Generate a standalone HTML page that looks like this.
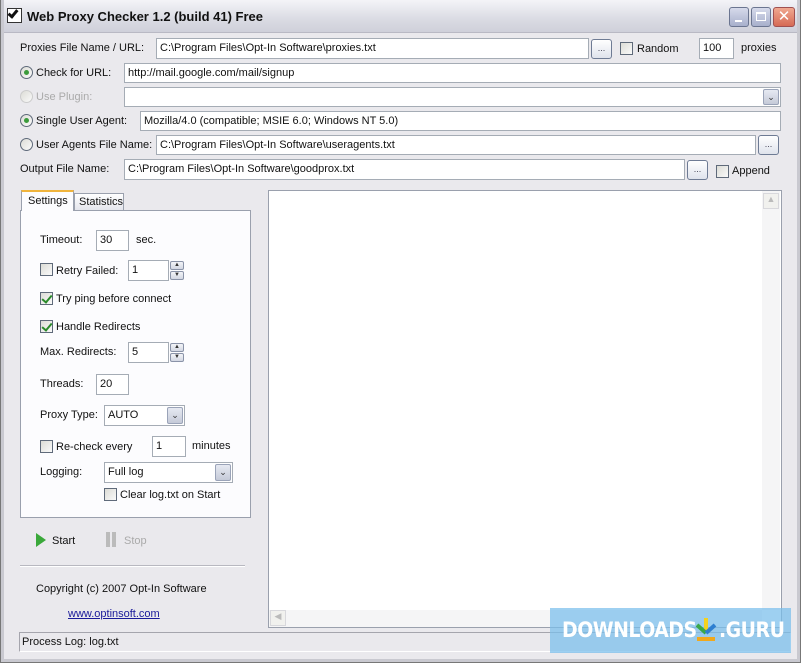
<!DOCTYPE html>
<html><head><meta charset="utf-8"><style>
*{box-sizing:border-box;margin:0;padding:0}
body{width:801px;height:663px;overflow:hidden;background:#eae9ed;font-family:"Liberation Sans",Arial,sans-serif;font-size:11px;color:#111;position:relative}
.a{position:absolute;white-space:nowrap}
.win{position:absolute;left:0;top:0;width:801px;height:663px;border:1px solid #777;border-top:none;box-shadow:inset 3px 0 0 #c9c9d0,inset -3px 0 0 #c9c9d0,inset 0 -3px 0 #c9c9d0}
.title{position:absolute;left:0;top:0;width:801px;height:33px;background:linear-gradient(#f4f4f8,#dadbe3 60%,#cfd0da);border-bottom:1px solid #b9b9c4}
.in{position:absolute;background:#fff;border:1px solid #a5acb5;padding:3px 3px;font-size:11px;line-height:13px}
.btn{position:absolute;width:21px;height:20px;border:1px solid #6e7b94;border-radius:3px;background:linear-gradient(#fff,#dfe3ec);font-size:9px;text-align:center;line-height:16px;color:#445}
.cb{position:absolute;width:13px;height:13px;border:1px solid #5f6a7a;background:linear-gradient(135deg,#dcdcd6,#fafafa)}
.cb.on::after{content:"";position:absolute;left:3px;top:0px;width:4px;height:8px;border:solid #2a8a2a;border-width:0 2px 2px 0;transform:rotate(40deg)}
.rd{position:absolute;width:13px;height:13px;border:1px solid #5f6a7a;border-radius:50%;background:linear-gradient(135deg,#dcdcd6,#fafafa)}
.rd.on::after{content:"";position:absolute;left:3px;top:3px;width:5px;height:5px;border-radius:50%;background:#3b9b3b}
.dd{position:absolute;right:1px;top:1px;bottom:1px;width:16px;border:1px solid #9aa3b8;border-radius:2px;background:linear-gradient(#e6e9f2,#c5cad8);text-align:center;font-size:9px;line-height:15px;color:#333}
.sp{position:absolute;width:14px;height:9px;border:1px solid #8a93a8;border-radius:2px;background:linear-gradient(#f3f4f8,#d3d7e2);font-size:6px;line-height:7px;text-align:center;color:#333}
</style></head><body>
<div class="title"></div>
<div class="win"></div>
<div class="a" style="left:7px;top:8px;width:15px;height:15px;border:1px solid #333;background:#fff"></div>
<div class="a" style="left:10px;top:8px;width:6px;height:10px;border:solid #111;border-width:0 3px 3px 0;transform:rotate(40deg)"></div>
<div class="a" style="left:27px;top:9px;font-weight:bold;font-size:13px">Web Proxy Checker 1.2 (build 41) Free</div>
<div class="a" style="left:729px;top:7px;width:20px;height:20px;border:1px solid #6b7590;border-radius:3px;background:linear-gradient(#d6daeb,#a8b0cc)"><div style="position:absolute;left:5px;top:12px;width:7px;height:2px;background:#fff"></div></div>
<div class="a" style="left:751px;top:7px;width:20px;height:20px;border:1px solid #6b7590;border-radius:3px;background:linear-gradient(#d6daeb,#a8b0cc)"><div style="position:absolute;left:4px;top:4px;width:10px;height:9px;border:1px solid #fff;border-top-width:2px"></div></div>
<div class="a" style="left:773px;top:7px;width:22px;height:20px;border:1px solid #a05050;border-radius:3px;background:linear-gradient(#f0a890,#d66a55);color:#fff;font-size:15px;text-align:center;line-height:18px">✕</div>

<div class="a" style="left:20px;top:42px">Proxies File Name / URL:</div>
<div class="in" style="left:156px;top:38px;width:433px;height:21px">C:\Program Files\Opt-In Software\proxies.txt</div>
<div class="btn" style="left:591px;top:39px">...</div>
<div class="cb" style="left:620px;top:42px"></div><div class="a" style="left:637px;top:43px">Random</div>
<div class="in" style="left:699px;top:38px;width:35px;height:21px">100</div>
<div class="a" style="left:741px;top:42px">proxies</div>

<div class="rd on" style="left:20px;top:66px"></div><div class="a" style="left:36px;top:67px">Check for URL:</div>
<div class="in" style="left:124px;top:63px;width:657px;height:20px">http://mail.google.com/mail/signup</div>
<div class="rd" style="left:20px;top:90px;border-color:#ccc"></div><div class="a" style="left:36px;top:91px;color:#aaa">Use Plugin:</div>
<div class="in" style="left:124px;top:87px;width:657px;height:20px"><div class="dd">⌄</div></div>
<div class="rd on" style="left:20px;top:114px"></div><div class="a" style="left:36px;top:115px">Single User Agent:</div>
<div class="in" style="left:140px;top:111px;width:641px;height:20px">Mozilla/4.0 (compatible; MSIE 6.0; Windows NT 5.0)</div>
<div class="rd" style="left:20px;top:138px"></div><div class="a" style="left:36px;top:139px">User Agents File Name:</div>
<div class="in" style="left:156px;top:135px;width:600px;height:20px">C:\Program Files\Opt-In Software\useragents.txt</div>
<div class="btn" style="left:758px;top:135px">...</div>
<div class="a" style="left:20px;top:163px">Output File Name:</div>
<div class="in" style="left:124px;top:159px;width:561px;height:21px">C:\Program Files\Opt-In Software\goodprox.txt</div>
<div class="btn" style="left:687px;top:160px">...</div>
<div class="cb" style="left:716px;top:165px"></div><div class="a" style="left:732px;top:165px">Append</div>

<div class="a" style="left:20px;top:210px;width:231px;height:308px;background:#fcfcfe;border:1px solid #9aa0ad"></div>
<div class="a" style="left:21px;top:190px;width:53px;height:21px;background:#fcfcfe;border:1px solid #9aa0ad;border-bottom:none;border-top:2px solid #f0b43c;padding:3px 0 0 6px">Settings</div>
<div class="a" style="left:74px;top:193px;width:50px;height:17px;background:linear-gradient(#fff,#e4e5ec);border:1px solid #9aa0ad;border-bottom:none;padding:2px 0 0 4px">Statistics</div>

<div class="a" style="left:40px;top:234px">Timeout:</div>
<div class="in" style="left:96px;top:230px;width:33px;height:21px">30</div><div class="a" style="left:136px;top:234px">sec.</div>
<div class="cb" style="left:40px;top:263px"></div><div class="a" style="left:56px;top:265px">Retry Failed:</div>
<div class="in" style="left:128px;top:260px;width:41px;height:21px">1</div>
<div class="sp" style="left:170px;top:261px">▲</div><div class="sp" style="left:170px;top:271px">▼</div>
<div class="cb on" style="left:40px;top:292px"></div><div class="a" style="left:56px;top:293px">Try ping before connect</div>
<div class="cb on" style="left:40px;top:320px"></div><div class="a" style="left:56px;top:321px">Handle Redirects</div>
<div class="a" style="left:40px;top:346px">Max. Redirects:</div>
<div class="in" style="left:128px;top:342px;width:41px;height:21px">5</div>
<div class="sp" style="left:170px;top:343px">▲</div><div class="sp" style="left:170px;top:353px">▼</div>
<div class="a" style="left:40px;top:378px">Threads:</div>
<div class="in" style="left:96px;top:374px;width:33px;height:21px">20</div>
<div class="a" style="left:40px;top:409px">Proxy Type:</div>
<div class="in" style="left:104px;top:405px;width:81px;height:21px">AUTO<div class="dd">⌄</div></div>
<div class="cb" style="left:40px;top:440px"></div><div class="a" style="left:56px;top:441px">Re-check every</div>
<div class="in" style="left:152px;top:436px;width:34px;height:21px">1</div><div class="a" style="left:192px;top:440px">minutes</div>
<div class="a" style="left:40px;top:466px">Logging:</div>
<div class="in" style="left:104px;top:462px;width:129px;height:21px">Full log<div class="dd">⌄</div></div>
<div class="cb" style="left:104px;top:488px"></div><div class="a" style="left:120px;top:489px">Clear log.txt on Start</div>

<div class="a" style="left:36px;top:533px;width:0;height:0;border-left:10px solid #3aa83a;border-top:7px solid transparent;border-bottom:7px solid transparent"></div>
<div class="a" style="left:52px;top:535px">Start</div>
<div class="a" style="left:106px;top:532px;width:4px;height:15px;background:#bbb"></div><div class="a" style="left:112px;top:532px;width:4px;height:15px;background:#bbb"></div>
<div class="a" style="left:124px;top:535px;color:#aaa">Stop</div>
<div class="a" style="left:20px;top:565px;width:225px;height:2px;border-top:1px solid #b8b8c0;border-bottom:1px solid #fff"></div>
<div class="a" style="left:36px;top:583px">Copyright (c) 2007 Opt-In Software</div>
<div class="a" style="left:68px;top:608px;color:#1a1a9a;text-decoration:underline">www.optinsoft.com</div>

<div class="a" style="left:268px;top:190px;width:514px;height:438px;background:#fff;border:1px solid #9aa0ad"></div>
<div class="a" style="left:762px;top:191px;width:18px;height:419px;background:#f5f5f6"></div>
<div class="a" style="left:763px;top:193px;width:16px;height:16px;border:1px solid #d8d8dc;background:#f1f1ee;font-size:9px;text-align:center;color:#bbb">▲</div>
<div class="a" style="left:269px;top:610px;width:493px;height:17px;background:#f5f5f6"></div>
<div class="a" style="left:270px;top:610px;width:16px;height:16px;border:1px solid #d8d8dc;background:#f1f1ee;font-size:9px;text-align:center;color:#bbb">◀</div>

<div class="a" style="left:19px;top:632px;width:772px;height:20px;border:1px solid #a5a5ad;border-right-color:#fff;border-bottom-color:#fff;padding:3px 2px">Process Log: log.txt</div>

<div class="a" style="left:550px;top:608px;width:241px;height:45px;background:rgba(120,190,235,0.72)"></div>
<div class="a" style="left:562px;top:618px;color:#fff;font-weight:bold;font-size:21px;letter-spacing:-0.5px;font-family:'DejaVu Sans Condensed','Liberation Sans',sans-serif">DOWNLOADS</div>
<svg class="a" style="left:693px;top:616px" width="26" height="28" viewBox="0 0 26 28"><path d="M13 2v14" stroke="#f4d21f" stroke-width="4"/><path d="M4 9l9 8" stroke="#3aa84a" stroke-width="4"/><path d="M22 9l-9 8" stroke="#2f7fd0" stroke-width="4"/><rect x="4" y="21" width="18" height="4" fill="#f0a81c"/></svg>
<div class="a" style="left:719px;top:618px;color:#fff;font-weight:bold;font-size:21px;letter-spacing:-0.5px;font-family:'DejaVu Sans Condensed','Liberation Sans',sans-serif">.GURU</div>
</body></html>
